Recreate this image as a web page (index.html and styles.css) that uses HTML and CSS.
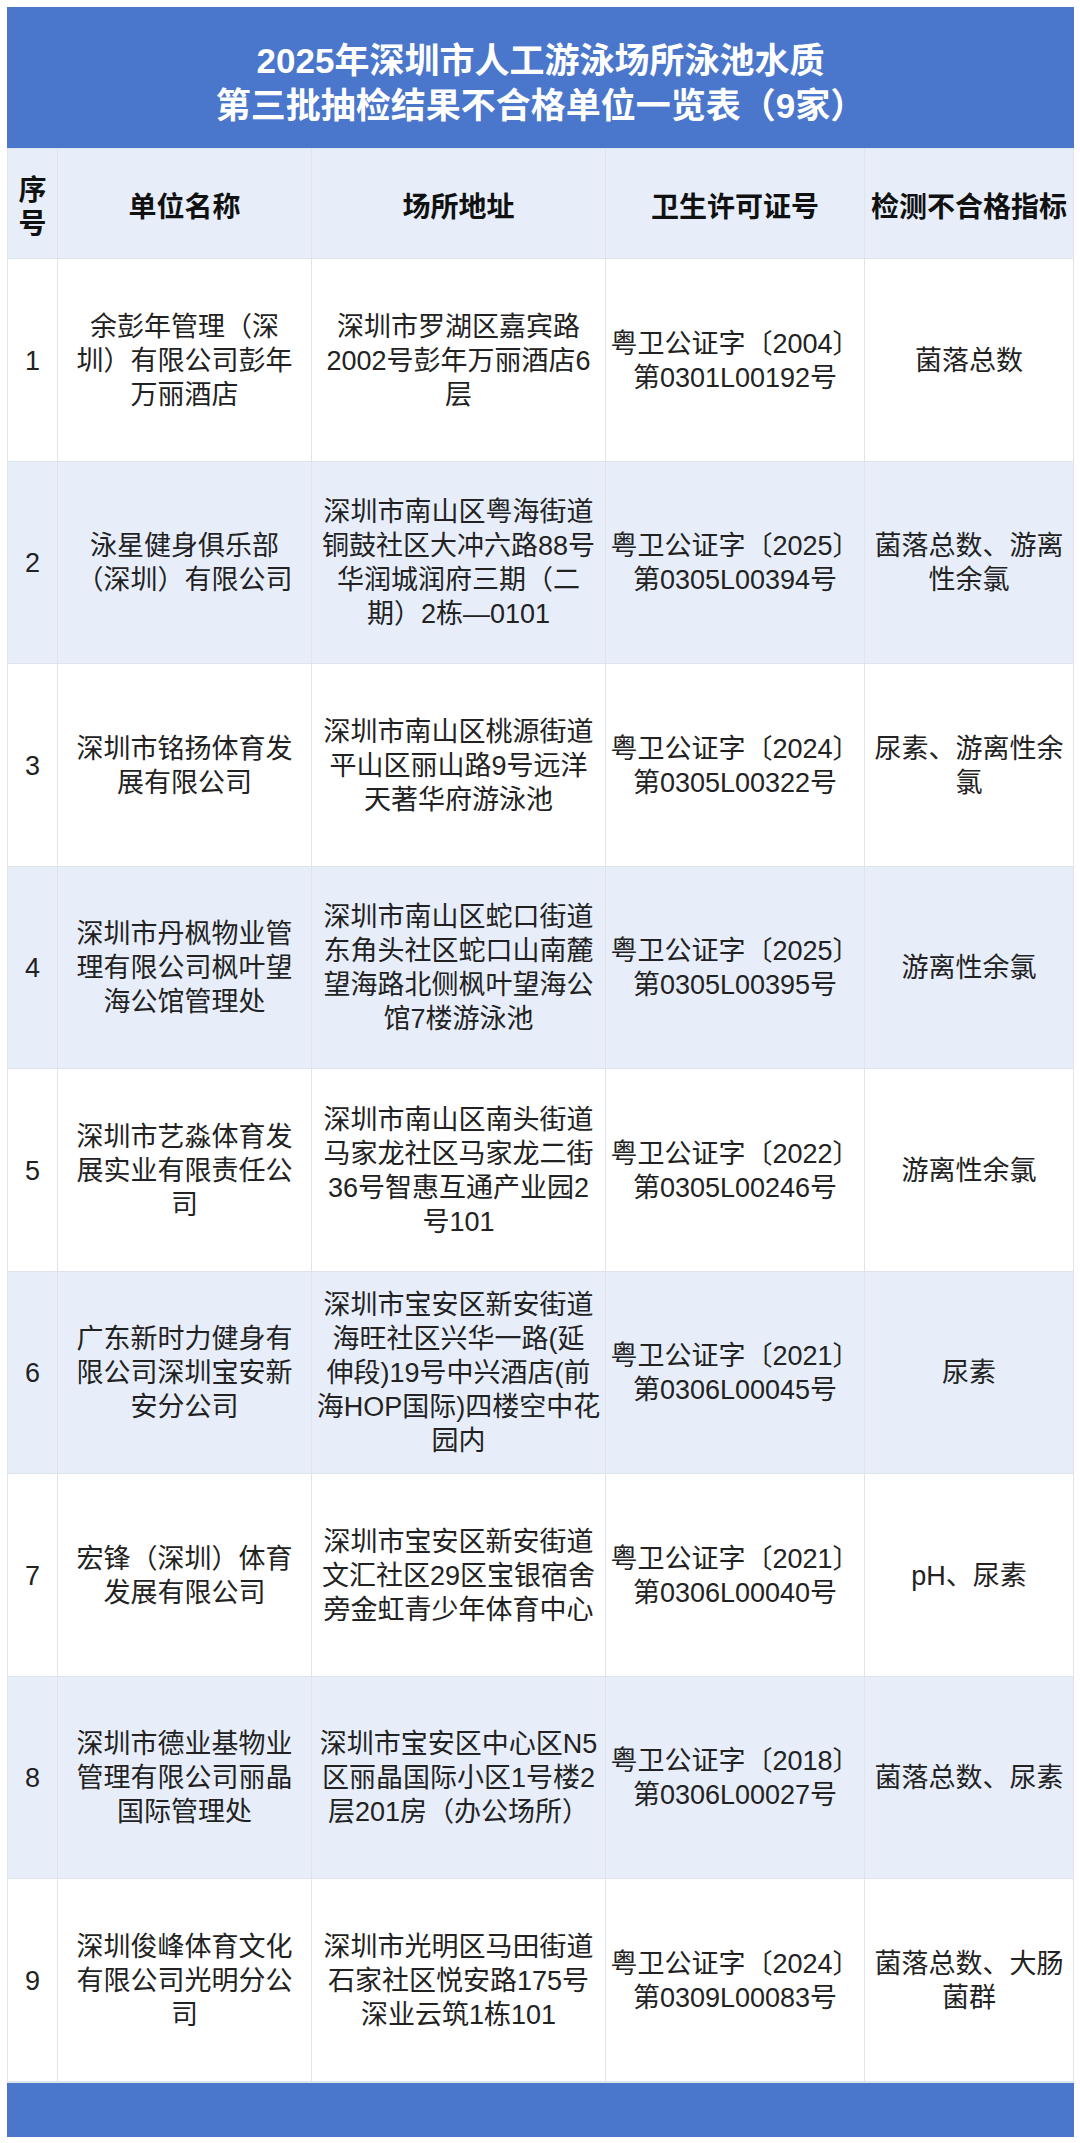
FILE: index.html
```html
<!DOCTYPE html>
<html lang="zh-CN">
<head>
<meta charset="utf-8">
<title>2025年深圳市人工游泳场所泳池水质第三批抽检结果不合格单位一览表</title>
<link rel="stylesheet" href="styles.css">
</head>
<body>
<div class="page">
  <div class="title">
    <div>2025年深圳市人工游泳场所泳池水质</div>
    <div>第三批抽检结果不合格单位一览表（9家）</div>
  </div>
  <div class="table">
    <div class="row head">
      <div class="cell">序<br>号</div>
      <div class="cell">单位名称</div>
      <div class="cell">场所地址</div>
      <div class="cell">卫生许可证号</div>
      <div class="cell">检测不合格指标</div>
    </div>
    <div class="row">
      <div class="cell">1</div>
      <div class="cell">余彭年管理（深<br>圳）有限公司彭年<br>万丽酒店</div>
      <div class="cell">深圳市罗湖区嘉宾路<br>2002号彭年万丽酒店6<br>层</div>
      <div class="cell">粤卫公证字〔2004〕<br>第0301L00192号</div>
      <div class="cell">菌落总数</div>
    </div>
    <div class="row alt">
      <div class="cell">2</div>
      <div class="cell">泳星健身俱乐部<br>（深圳）有限公司</div>
      <div class="cell">深圳市南山区粤海街道<br>铜鼓社区大冲六路88号<br>华润城润府三期（二<br>期）2栋—0101</div>
      <div class="cell">粤卫公证字〔2025〕<br>第0305L00394号</div>
      <div class="cell">菌落总数、游离<br>性余氯</div>
    </div>
    <div class="row">
      <div class="cell">3</div>
      <div class="cell">深圳市铭扬体育发<br>展有限公司</div>
      <div class="cell">深圳市南山区桃源街道<br>平山区丽山路9号远洋<br>天著华府游泳池</div>
      <div class="cell">粤卫公证字〔2024〕<br>第0305L00322号</div>
      <div class="cell">尿素、游离性余<br>氯</div>
    </div>
    <div class="row alt">
      <div class="cell">4</div>
      <div class="cell">深圳市丹枫物业管<br>理有限公司枫叶望<br>海公馆管理处</div>
      <div class="cell">深圳市南山区蛇口街道<br>东角头社区蛇口山南麓<br>望海路北侧枫叶望海公<br>馆7楼游泳池</div>
      <div class="cell">粤卫公证字〔2025〕<br>第0305L00395号</div>
      <div class="cell">游离性余氯</div>
    </div>
    <div class="row">
      <div class="cell">5</div>
      <div class="cell">深圳市艺淼体育发<br>展实业有限责任公<br>司</div>
      <div class="cell">深圳市南山区南头街道<br>马家龙社区马家龙二街<br>36号智惠互通产业园2<br>号101</div>
      <div class="cell">粤卫公证字〔2022〕<br>第0305L00246号</div>
      <div class="cell">游离性余氯</div>
    </div>
    <div class="row alt">
      <div class="cell">6</div>
      <div class="cell">广东新时力健身有<br>限公司深圳宝安新<br>安分公司</div>
      <div class="cell">深圳市宝安区新安街道<br>海旺社区兴华一路(延<br>伸段)19号中兴酒店(前<br>海HOP国际)四楼空中花<br>园内</div>
      <div class="cell">粤卫公证字〔2021〕<br>第0306L00045号</div>
      <div class="cell">尿素</div>
    </div>
    <div class="row">
      <div class="cell">7</div>
      <div class="cell">宏锋（深圳）体育<br>发展有限公司</div>
      <div class="cell">深圳市宝安区新安街道<br>文汇社区29区宝银宿舍<br>旁金虹青少年体育中心</div>
      <div class="cell">粤卫公证字〔2021〕<br>第0306L00040号</div>
      <div class="cell">pH、尿素</div>
    </div>
    <div class="row alt">
      <div class="cell">8</div>
      <div class="cell">深圳市德业基物业<br>管理有限公司丽晶<br>国际管理处</div>
      <div class="cell">深圳市宝安区中心区N5<br>区丽晶国际小区1号楼2<br>层201房（办公场所）</div>
      <div class="cell">粤卫公证字〔2018〕<br>第0306L00027号</div>
      <div class="cell">菌落总数、尿素</div>
    </div>
    <div class="row">
      <div class="cell">9</div>
      <div class="cell">深圳俊峰体育文化<br>有限公司光明分公<br>司</div>
      <div class="cell">深圳市光明区马田街道<br>石家社区悦安路175号<br>深业云筑1栋101</div>
      <div class="cell">粤卫公证字〔2024〕<br>第0309L00083号</div>
      <div class="cell">菌落总数、大肠<br>菌群</div>
    </div>
  </div>
  <div class="footer"></div>
</div>
</body>
</html>
```
FILE: styles.css
```css
html, body {
  margin: 0;
  padding: 0;
  background: #ffffff;
}

body {
  font-family: "Liberation Sans", "Noto Sans CJK SC", sans-serif;
  color: #222222;
}

.page {
  width: 1067px;
  padding: 7px 6px 7px 7px;
}

.title {
  height: 142px;
  box-sizing: border-box;
  background: #4a76cb;
  color: #ffffff;
  font-size: 35px;
  font-weight: 700;
  line-height: 45px;
  display: flex;
  flex-direction: column;
  align-items: center;
  justify-content: center;
  padding-top: 10px;
  border-bottom: 1px solid #dfe5ee;
}

.table {
  border-left: 1px solid #e0e4ea;
  border-right: 1px solid #e0e4ea;
}

.row {
  display: grid;
  grid-template-columns: 50px 254px 294px 259px 208px;
  height: 202.5px;
  box-sizing: border-box;
  border-bottom: 1.5px solid #dfe3ea;
  background: #ffffff;
}

.row.alt {
  background: #e7eefa;
}

.row.head {
  height: 110px;
  background: #e7eefa;
  font-weight: 700;
  font-size: 28px;
  color: #111111;
}

.cell {
  display: flex;
  align-items: center;
  justify-content: center;
  text-align: center;
  white-space: nowrap;
  font-size: 27px;
  line-height: 34px;
  border-right: 1px solid #e0e4ea;
  padding-top: 2px;
}

.row.head .cell {
  font-size: 28px;
  line-height: 34px;
  padding-top: 8px;
}

.cell:last-child {
  border-right: none;
}

.footer {
  height: 54px;
  background: #4a76cb;
  border-top: 1px solid #dfe3ea;
}
```
